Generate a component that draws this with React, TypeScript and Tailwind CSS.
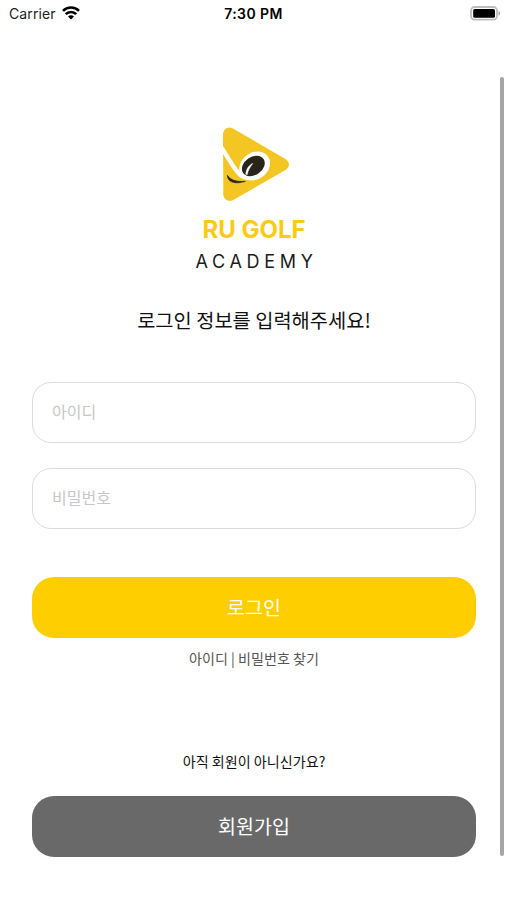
import type { ReactNode } from 'react'

const inputs = [
  { name: 'id', type: 'text', placeholder: '아이디' },
  { name: 'password', type: 'password', placeholder: '비밀번호' },
]

function StatusBar() {
  return (
    <header className="grid h-7 grid-cols-3 items-center pl-[9px] pr-[6px] font-['Inter',sans-serif] text-black">
      <div className="flex items-center gap-[6px]">
        <span className="text-[14px] leading-none tracking-[0.1px] text-[#222]">Carrier</span>
        <svg className="-mt-[3px] h-[14px] w-[18px]" viewBox="0 0 18 14" fill="none" stroke="#000" strokeWidth="2.6" aria-hidden="true">
          <path d="M1 4.8a11.3 11.3 0 0 1 16 0" />
          <path d="M3.8 8.2a7.3 7.3 0 0 1 10.4 0" />
          <path d="M9 13.6 6 10.6a4.2 4.2 0 0 1 6 0Z" fill="#000" stroke="none" />
        </svg>
      </div>
      <span className="-ml-[3px] text-center text-[14px] font-semibold leading-none tracking-[0.4px]">7:30 PM</span>
      <svg className="-mt-[2px] h-[15px] w-[31px] justify-self-end" viewBox="0 0 31 15" aria-hidden="true">
        <rect x="1" y="1" width="26" height="12.6" rx="3.6" fill="#fff" stroke="#bdbdbd" strokeWidth="1.8" />
        <rect x="3.2" y="2.9" width="21.8" height="8.9" rx="1.6" fill="#000" />
        <path d="M28.5 5v4.6c1-.4 1.6-1.3 1.6-2.3S29.5 5.4 28.5 5Z" fill="#aaa" />
      </svg>
    </header>
  )
}

function Logo() {
  return (
    <svg className="ml-px h-[95px] w-[90px]" viewBox="0 0 270 285" aria-hidden="true">
      <path
        d="M39 60C39 42 55 32 70 41L225 131C241 140 241 157 225 166L71 254C56 263 40 254 40 238Z"
        fill="#f3c624"
      />
      <path d="M32 94L72 157C84 174 94 188 114 189" fill="none" stroke="#fff" strokeWidth="13" />
      <ellipse cx="134" cy="153" rx="49" ry="40" transform="rotate(-36 134 153)" fill="#fff" />
      <ellipse cx="130" cy="153" rx="37" ry="27" transform="rotate(-34 130 153)" fill="#282419" />
      <path d="M107 178C108 164 115 151 129 145C119 158 114 168 112 179Z" fill="#fff" stroke="#fff" strokeWidth="1" />
      <path d="M52 181C62 196 79 201 106 199C83 207 53 206 52 181Z" fill="#282419" stroke="#282419" strokeWidth="2" />
    </svg>
  )
}

function Button({ className, children }: { className: string; children: ReactNode }) {
  return (
    <button type="button" className={`h-[61px] w-full rounded-[22px] pb-[2px] text-[19.5px] text-white ${className}`}>
      {children}
    </button>
  )
}

export default function App() {
  return (
    <div className="relative h-[900px] w-full overflow-hidden bg-white font-['Noto_Sans_CJK_KR',sans-serif]">
      <StatusBar />

      <main className="flex flex-col items-center pl-8 pr-[31px] pt-[87px]">
        <Logo />
        <div className="mt-[5px] text-center font-['Inter',sans-serif]">
          <h1 className="text-[24px] font-bold leading-[30px] text-[#fbcb14]">RU GOLF</h1>
          <p className="mt-[2px] pl-[5px] text-[18px] leading-[30px] tracking-[4.7px] text-[#1c1c1c]">ACADEMY</p>
        </div>

        <h2 className="mt-[28px] text-[19.8px] leading-[30px] text-[#111]">로그인 정보를 입력해주세요!</h2>

        <form className="mt-[47px] flex w-full flex-col gap-[25px]">
          {inputs.map((i) => (
            <input
              key={i.name}
              type={i.type}
              placeholder={i.placeholder}
              className="h-[61px] w-full rounded-[19px] border border-[#dcdcdc] px-[19px] pb-[3px] text-[16px] placeholder:text-[#c7c7c7]"
            />
          ))}
          <Button className="mt-[23px] bg-[#ffce00]">로그인</Button>
        </form>
        <p className="mt-[10px] text-[14.1px] leading-[21px] text-[#555]">아이디 | 비밀번호 찾기</p>

        <p className="mt-[82px] text-[14.1px] leading-[21px] text-[#111]">아직 회원이 아니신가요?</p>
        <div className="mt-[24px] w-full">
          <Button className="bg-[#696969]">회원가입</Button>
        </div>
      </main>

      {/* scroll indicator */}
      <div className="absolute right-[3px] top-[77px] h-[779px] w-[4px] rounded-full bg-[#a6a6a6]" />
    </div>
  )
}
